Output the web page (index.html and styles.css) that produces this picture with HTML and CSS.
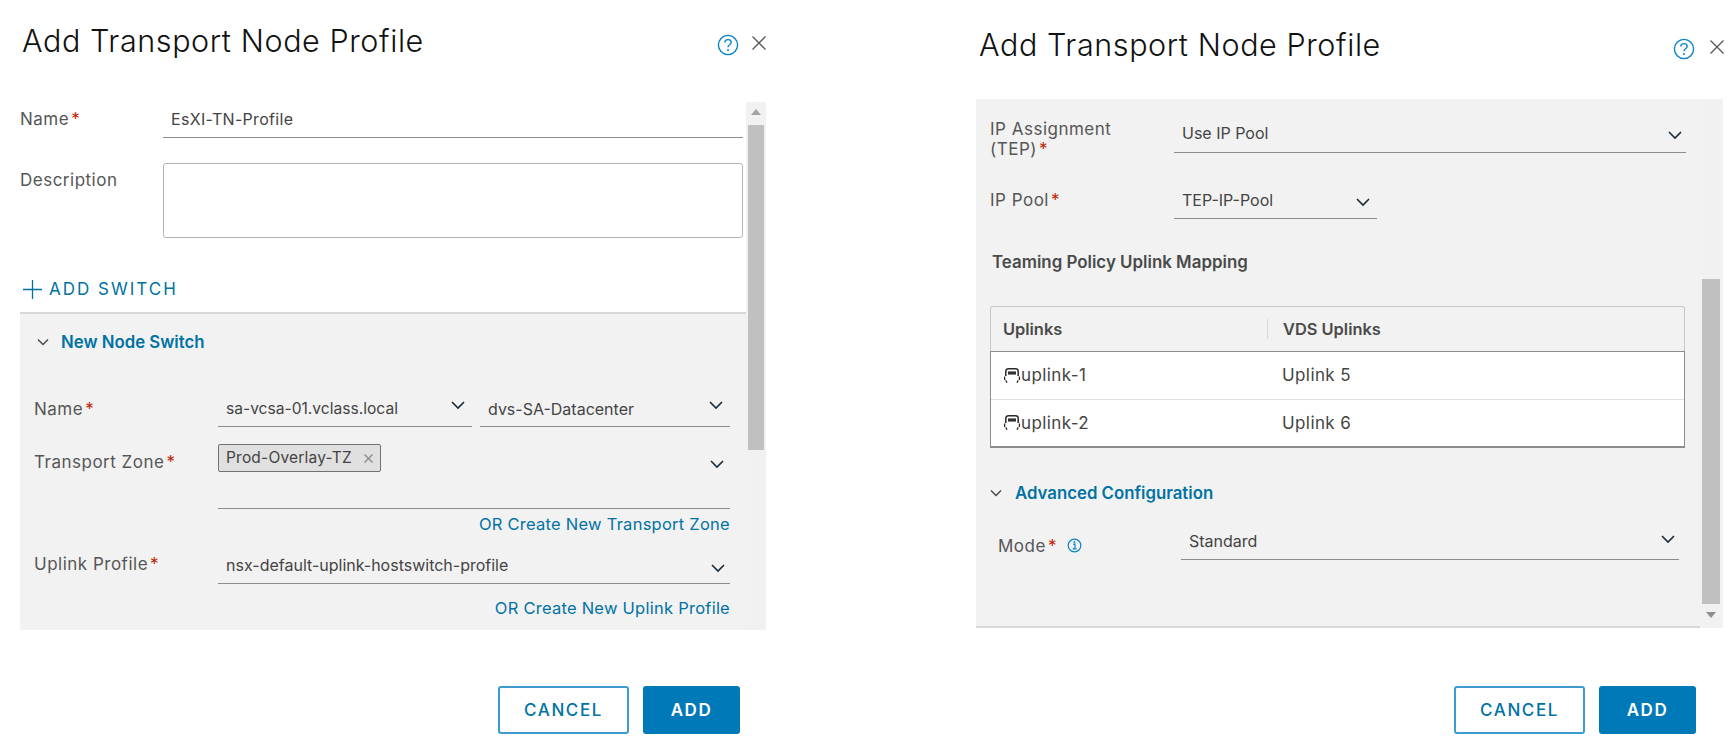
FILE: index.html
```html
<!DOCTYPE html>
<html lang="en">
<head>
    <meta charset="UTF-8">
    <meta name="viewport" content="width=device-width, initial-scale=1.0">
    <title>Add Transport Node Profile</title>
    <link rel="stylesheet" href="styles.css">
</head>
<body>
    <!-- left dialog -->
    <div class="modal modal-left">
        <div class="modal-head">
            <h1>Add Transport Node Profile</h1>
            <svg class="help" width="22" height="22" viewBox="0 0 22 22"><circle cx="11" cy="11" r="9.6" fill="none" stroke="#0a84c6" stroke-width="1.4"/><path d="M7.8 8.6c0-1.9 1.4-3 3.2-3s3.2 1.1 3.2 2.7c0 2.4-3.2 2.4-3.2 4.9" fill="none" stroke="#0a84c6" stroke-width="1.4"/><circle cx="11" cy="16" r="1" fill="#0a84c6"/></svg>
            <svg class="close" width="16" height="16" viewBox="0 0 16 16"><path d="M1.5 1.5l13 13M14.5 1.5l-13 13" stroke="#555" stroke-width="1.3" fill="none"/></svg>
        </div>
        <div class="panel">
            <div class="content">
                <div class="top-form">
                    <div class="row name-row">
                        <div class="label top-label">Name<span class="req">*</span></div>
                        <div class="field field-wide">EsXI-TN-Profile</div>
                    </div>
                    <div class="row desc-row">
                        <div class="label top-label">Description</div>
                        <div class="textarea"></div>
                    </div>
                    <div class="add-switch">
                        <svg width="19" height="19" viewBox="0 0 19 19"><path d="M9.5 0v19M0 9.5h19" stroke="#0072a3" stroke-width="1.3"/></svg>
                        <span>ADD SWITCH</span>
                    </div>
                </div>
                <div class="switch-box">
                    <div class="section-title">
                        <svg class="section-chev" width="12" height="8" viewBox="0 0 12 8"><path d="M1 1.5l5 5 5-5" fill="none" stroke="#444" stroke-width="1.3"/></svg>
                        <span>New Node Switch</span>
                    </div>
                    <div class="row sw-name">
                        <div class="label sw-label">Name<span class="req">*</span></div>
                        <div class="select sel-a">sa-vcsa-01.vclass.local<svg class="chev" width="14" height="9" viewBox="0 0 14 9"><path d="M1 1l6 6 6-6" fill="none" stroke="#1b2a38" stroke-width="1.6"/></svg></div>
                        <div class="select sel-b">dvs-SA-Datacenter<svg class="chev" width="14" height="9" viewBox="0 0 14 9"><path d="M1 1l6 6 6-6" fill="none" stroke="#1b2a38" stroke-width="1.6"/></svg></div>
                    </div>
                    <div class="row sw-zone">
                        <div class="label sw-label">Transport Zone<span class="req">*</span></div>
                        <div class="zone-field">
                            <div class="chip">Prod-Overlay-TZ<svg width="9" height="9" viewBox="0 0 9 9"><path d="M.5.5l8 8M8.5.5l-8 8" stroke="#888" stroke-width="1.2"/></svg></div>
                            <svg class="chev" width="14" height="9" viewBox="0 0 14 9"><path d="M1 1l6 6 6-6" fill="none" stroke="#1b2a38" stroke-width="1.6"/></svg>
                        </div>
                    </div>
                    <a class="create-link link-zone">OR Create New Transport Zone</a>
                    <div class="row sw-uplink">
                        <div class="label sw-label">Uplink Profile<span class="req">*</span></div>
                        <div class="select sel-full">nsx-default-uplink-hostswitch-profile<svg class="chev" width="14" height="9" viewBox="0 0 14 9"><path d="M1 1l6 6 6-6" fill="none" stroke="#1b2a38" stroke-width="1.6"/></svg></div>
                    </div>
                    <a class="create-link link-uplink">OR Create New Uplink Profile</a>
                </div>
            </div>
            <div class="scrollbar scrollbar-left">
                <div class="arrow-up"></div>
                <div class="thumb"></div>
            </div>
        </div>
        <div class="modal-foot">
            <button class="btn btn-outline">CANCEL</button>
            <button class="btn btn-solid">ADD</button>
        </div>
    </div>

    <!-- right dialog -->
    <div class="modal modal-right">
        <div class="modal-head">
            <h1>Add Transport Node Profile</h1>
            <svg class="help" width="22" height="22" viewBox="0 0 22 22"><circle cx="11" cy="11" r="9.6" fill="none" stroke="#0a84c6" stroke-width="1.4"/><path d="M7.8 8.6c0-1.9 1.4-3 3.2-3s3.2 1.1 3.2 2.7c0 2.4-3.2 2.4-3.2 4.9" fill="none" stroke="#0a84c6" stroke-width="1.4"/><circle cx="11" cy="16" r="1" fill="#0a84c6"/></svg>
            <svg class="close" width="16" height="16" viewBox="0 0 16 16"><path d="M1.5 1.5l13 13M14.5 1.5l-13 13" stroke="#555" stroke-width="1.3" fill="none"/></svg>
        </div>
        <div class="panel panel-right">
            <div class="content content-right">
                <div class="row ip-row">
                    <div class="label ip-label">
                        <div>IP Assignment</div>
                        <div>(TEP)<span class="req">*</span></div>
                    </div>
                    <div class="select sel-ip">Use IP Pool<svg class="chev" width="14" height="9" viewBox="0 0 14 9"><path d="M1 1l6 6 6-6" fill="none" stroke="#1b2a38" stroke-width="1.6"/></svg></div>
                </div>
                <div class="row pool-row">
                    <div class="label ip-label">IP Pool<span class="req">*</span></div>
                    <div class="select sel-pool">TEP-IP-Pool<svg class="chev" width="14" height="9" viewBox="0 0 14 9"><path d="M1 1l6 6 6-6" fill="none" stroke="#1b2a38" stroke-width="1.6"/></svg></div>
                </div>
                <div class="teaming">Teaming Policy Uplink Mapping</div>
                <div class="grid">
                    <div class="grid-head">
                        <div class="cell-a">Uplinks</div>
                        <div class="cell-b">VDS Uplinks</div>
                    </div>
                    <div class="grid-body">
                        <div class="grid-row">
                            <div class="cell-a"><svg width="18" height="17" viewBox="0 0 18 17"><path d="M2.8 9V4.5Q2.8 1.8 5.5 1.8H12.5Q15.2 1.8 15.2 4.5V9" fill="none" stroke="#2b2b2b" stroke-width="1.5"/><path d="M5 4.4h8v3.2H5z" fill="#333"/><path d="M1.6 9.5V13M16.4 9.5V13M2.8 13.4l1.2 2.4M15.2 13.4l-1.2 2.4" fill="none" stroke="#2b2b2b" stroke-width="1.3"/></svg>uplink-1</div>
                            <div class="cell-b">Uplink 5</div>
                        </div>
                        <div class="grid-row">
                            <div class="cell-a"><svg width="18" height="17" viewBox="0 0 18 17"><path d="M2.8 9V4.5Q2.8 1.8 5.5 1.8H12.5Q15.2 1.8 15.2 4.5V9" fill="none" stroke="#2b2b2b" stroke-width="1.5"/><path d="M5 4.4h8v3.2H5z" fill="#333"/><path d="M1.6 9.5V13M16.4 9.5V13M2.8 13.4l1.2 2.4M15.2 13.4l-1.2 2.4" fill="none" stroke="#2b2b2b" stroke-width="1.3"/></svg>uplink-2</div>
                            <div class="cell-b">Uplink 6</div>
                        </div>
                    </div>
                </div>
                <div class="section-title adv-title">
                    <svg class="section-chev" width="12" height="8" viewBox="0 0 12 8"><path d="M1 1.5l5 5 5-5" fill="none" stroke="#444" stroke-width="1.3"/></svg>
                    <span>Advanced Configuration</span>
                </div>
                <div class="row mode-row">
                    <div class="label mode-label"><span>Mode<span class="req">*</span></span>
                        <svg width="15" height="15" viewBox="0 0 15 15"><circle cx="7.5" cy="7.5" r="6.3" fill="none" stroke="#0a84c6" stroke-width="1.2"/><path d="M6 6.2h2v4.4M5.6 10.8h4" fill="none" stroke="#0a84c6" stroke-width="1.2"/><circle cx="7.4" cy="4" r=".9" fill="#0a84c6"/></svg>
                    </div>
                    <div class="select sel-mode">Standard<svg class="chev" width="14" height="9" viewBox="0 0 14 9"><path d="M1 1l6 6 6-6" fill="none" stroke="#1b2a38" stroke-width="1.6"/></svg></div>
                </div>
            </div>
            <div class="scrollbar scrollbar-right">
                <div class="thumb"></div>
                <div class="arrow-down"></div>
            </div>
        </div>
        <div class="modal-foot">
            <button class="btn btn-outline">CANCEL</button>
            <button class="btn btn-solid">ADD</button>
        </div>
    </div>
</body>
</html>
```

FILE: styles.css
```css
html, body {
    margin: 0;
    padding: 0;
    height: 750px;
    overflow: hidden;
    background: white;
}
body {
    display: flex;
    font-family: 'Inter', 'Liberation Sans', sans-serif;
    font-size: 16px;
    line-height: 20px;
    color: #444;
}
svg {
    display: block;
    flex: none;
}
.modal {
    display: flex;
    flex-direction: column;
    flex: none;
}
.modal-left {
    width: 746px;
    margin-left: 20px;
}
.modal-right {
    width: 747px;
    margin-left: 210px;
}
.modal-head {
    display: flex;
    align-items: flex-start;
    height: 102px;
}
.modal-right .modal-head {
    height: 99px;
}
h1 {
    font-family: 'Inter', sans-serif;
    font-weight: 300;
    font-size: 30.5px;
    line-height: 36px;
    letter-spacing: .6px;
    color: #111;
    margin: 23px 0 0 2px;
    flex: 1;
}
.modal-right h1 {
    margin-top: 27px;
    margin-left: 3px;
}
.help {
    margin: 34px 12px 0 0;
}
.modal-right .help {
    margin: 38px 9px 0 0;
}
.close {
    margin: 35px -1px 0 0;
}
.modal-right .close {
    margin: 39px -2px 0 5px;
}
.panel {
    display: flex;
    height: 528px;
    background: #f2f2f2;
}
.panel-right {
    height: 529px;
}
.content {
    width: 726px;
    display: flex;
    flex-direction: column;
}
.req {
    color: #c21d00;
    margin-left: 2px;
}
.row {
    display: flex;
}
.label {
    color: #565656;
    font-size: 17px;
    letter-spacing: .5px;
}

/* left form */
.top-form {
    background: white;
    height: 210px;
    display: flex;
    flex-direction: column;
}
.top-label {
    width: 143px;
}
.name-row {
    height: 36px;
    align-items: flex-start;
    padding-top: 7px;
    box-sizing: border-box;
}
.field-wide {
    flex: none;
    width: 580px;
    height: 29px;
    box-sizing: border-box;
    padding-left: 8px;
    border-bottom: 1px solid #8c8c8c;
    color: #444;
    letter-spacing: .3px;
}
.desc-row {
    margin-top: 25px;
}
.desc-row .label {
    padding-top: 7px;
}
.textarea {
    width: 580px;
    height: 75px;
    box-sizing: border-box;
    background: white;
    border: 1px solid #b3b3b3;
    border-radius: 3px;
}
.add-switch {
    display: flex;
    align-items: center;
    gap: 7px;
    margin: 41px 0 0 3px;
    color: #0072a3;
    letter-spacing: 2px;
    font-size: 17px;
}
.switch-box {
    flex: 1;
    border-top: 2px solid #d8d8d8;
    padding: 0 16px 0 14px;
}
.section-title {
    display: flex;
    align-items: center;
    gap: 9px;
    margin-top: 18px;
    padding-left: 2px;
    font-weight: 600;
    font-size: 16.8px;
    color: #0072a3;
}
.section-chev {
    margin-left: 1px;
    margin-right: 3px;
}
.sw-name {
    margin-top: 47px;
}
.sw-label {
    width: 184px;
    flex: none;
}
.select {
    display: flex;
    justify-content: space-between;
    box-sizing: border-box;
    padding: 0 1px 0 8px;
    border-bottom: 1px solid #8c8c8c;
    color: #444;
    height: 28px;
}
.sel-a {
    width: 254px;
    padding-right: 6px;
    font-size: 15.6px;
}
.sel-b {
    width: 250px;
    margin-left: 8px;
    padding-right: 6px;
}
.chev {
    margin-top: 2px;
    margin-right: 1px;
}
.sw-zone {
    margin-top: 17px;
}
.sw-zone .label {
    margin-top: 8px;
}
.zone-field {
    width: 512px;
    height: 65px;
    box-sizing: border-box;
    border-bottom: 1px solid #8c8c8c;
    display: flex;
    justify-content: space-between;
}
.zone-field .chev {
    margin-top: 16px;
    margin-right: 6px;
}
.chip {
    display: flex;
    align-items: center;
    gap: 12px;
    box-sizing: border-box;
    width: 163px;
    height: 28px;
    padding-left: 7px;
    background: #e0e0e0;
    border: 1px solid #727272;
    border-radius: 2px;
    font-size: 15.5px;
    letter-spacing: .2px;
}
.create-link {
    display: block;
    text-align: right;
    color: #0072a3;
    line-height: 18px;
    font-size: 16.5px;
    letter-spacing: .25px;
}
.link-zone {
    margin-top: 6px;
}
.sw-uplink {
    margin-top: 20px;
}
.sw-uplink .label {
    margin-top: 1px;
}
.sel-full {
    width: 512px;
    padding-top: 2px;
    padding-left: 8px;
    height: 31px;
    font-size: 16px;
}
.sel-full .chev {
    margin-top: 9px;
    margin-right: 4px;
}
.link-uplink {
    margin-top: 15px;
}

/* scrollbars */
.scrollbar {
    width: 20px;
    display: flex;
    flex-direction: column;
    align-items: center;
    background: #f1f1f1;
}
.scrollbar-left .thumb {
    width: 16px;
    height: 325px;
    margin-top: 10px;
    background: #c0c0c0;
}
.arrow-up {
    width: 0;
    height: 0;
    margin-top: 7px;
    border-left: 5px solid transparent;
    border-right: 5px solid transparent;
    border-bottom: 6px solid #a3a3a3;
}
.arrow-down {
    width: 0;
    height: 0;
    margin-top: 8px;
    border-left: 5px solid transparent;
    border-right: 5px solid transparent;
    border-top: 6px solid #8f8f8f;
}
.scrollbar-right {
    width: 18px;
    margin-left: 2px;
}
.scrollbar-right .thumb {
    width: 18px;
    height: 325px;
    margin-top: 180px;
    background: #c0c0c0;
}

/* right form */
.content-right {
    width: 724px;
    box-sizing: border-box;
    border-bottom: 2px solid #d8d8d8;
    padding-left: 14px;
}
.ip-label {
    flex: none;
    line-height: 20px;
    width: 184px;
}
.ip-row {
    margin-top: 20px;
}
.sel-ip {
    width: 512px;
    height: 34px;
    padding-top: 4px;
    padding-right: 0;
}
.sel-ip .chev {
    margin-top: 8px;
    margin-right: 4px;
}
.pool-row {
    margin-top: 31px;
}
.sel-pool {
    width: 203px;
    height: 29px;
    padding-right: 6px;
}
.sel-pool .chev {
    margin-top: 8px;
}
.teaming {
    margin: 33px 0 0 2px;
    font-weight: 600;
    font-size: 16.9px;
    color: #4a4a4a;
}
.grid {
    width: 695px;
    box-sizing: border-box;
    margin-top: 34px;
    border: 1px solid #c8c8c8;
    border-bottom: 0;
    border-radius: 3px 3px 0 0;
}
.grid-head {
    display: flex;
    align-items: center;
    height: 44px;
    font-weight: 600;
    font-size: 16.4px;
    color: #4a4a4a;
}
.cell-a {
    width: 276px;
    padding-left: 12px;
    box-sizing: border-box;
    display: flex;
    align-items: center;
}
.cell-b {
    padding-left: 15px;
}
.grid-head .cell-b {
    border-left: 1px solid #d8d8d8;
}
.grid-body {
    background: white;
    margin: 0 -1px;
    border: 1px solid #8c8c8c;
    border-bottom-width: 2px;
}
.grid-row {
    display: flex;
    align-items: center;
    height: 46.5px;
    font-size: 17px;
    letter-spacing: .4px;
}
.grid-row + .grid-row {
    border-top: 1px solid #e0e0e0;
}
.adv-title {
    margin-top: 35px;
    padding-left: 0;
    gap: 10px;
}
.adv-title .section-chev {
    margin-left: 0;
}
.mode-row {
    margin-top: 31px;
}
.mode-label {
    display: flex;
    align-items: flex-start;
    gap: 10px;
    width: 191px;
    padding-left: 8px;
    box-sizing: border-box;
    margin-top: 2px;
}
.mode-label svg {
    margin-top: 2px;
}
.sel-mode {
    width: 498px;
    height: 29px;
    padding-right: 0;
    margin-top: -3px;
}
.sel-mode .chev {
    margin-top: 4px;
    margin-right: 4px;
}

/* footer buttons */
.modal-foot {
    display: flex;
    justify-content: flex-end;
    gap: 14px;
    padding: 56px 26px 0 0;
}
.modal-right .modal-foot {
    padding: 58px 27px 0 0;
}
.btn {
    height: 48px;
    box-sizing: border-box;
    border-radius: 3px;
    font-family: 'Inter', sans-serif;
    font-size: 17px;
    letter-spacing: 1.6px;
    font-weight: 500;
}
.btn-outline {
    width: 131px;
    background: white;
    color: #0072a3;
    border: 2px solid #3d9ccf;
}
.btn-solid {
    width: 97px;
    background: #0079b8;
    color: white;
    border: 0;
    font-weight: 600;
}
```
